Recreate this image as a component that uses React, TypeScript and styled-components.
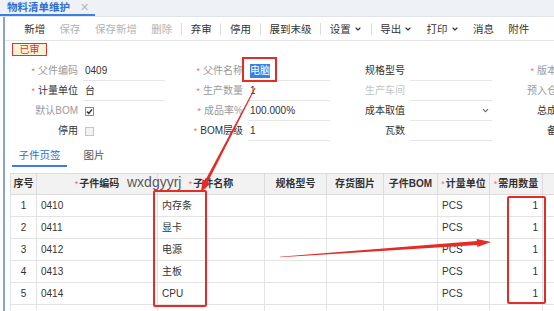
import React from "react";
import styled, { createGlobalStyle } from "styled-components";
import { ChevronDown } from "lucide-react";

const GlobalStyle = createGlobalStyle`
  html, body {
    margin: 0;
    padding: 0;
    background: #fff;
  }
  body {
    font-family: "Liberation Sans", "Noto Sans CJK SC", sans-serif;
    color: #333;
  }
`;

const Page = styled.div`
  position: relative;
  width: 554px;
  height: 311px;
  overflow: hidden;
  background: #fff;
`;

const TabBar = styled.div`
  height: 16px;
  background: #eef1f6;
  border-bottom: 1px solid #dfe4ec;
  display: flex;
`;

const DocTab = styled.div`
  width: 95px;
  height: 16px;
  box-sizing: border-box;
  padding-left: 7px;
  display: flex;
  align-items: center;
  gap: 10px;
  border-bottom: 2px solid #3d7fdc;
  color: #2e6fd3;
  font-size: 10.5px;
  font-weight: bold;
  line-height: 14px;
`;

const CloseMark = styled.span`
  color: #b4b8c0;
  font-weight: normal;
  font-size: 11px;
`;

const Body = styled.div`
  margin-left: 3px;
  border-left: 2px solid #86a2d6;
  height: 294px;
`;

const Toolbar = styled.div`
  height: 23px;
  border-bottom: 1px solid #e4e4e4;
  display: flex;
  align-items: center;
  padding-left: 12px;
  font-size: 10.5px;
  line-height: 14px;
  white-space: nowrap;
`;

const ToolButton = styled.span<{ $disabled?: boolean }>`
  display: flex;
  align-items: center;
  gap: 3px;
  padding: 0 7.2px;
  color: ${(p) => (p.$disabled ? "#b3b3b3" : "#333")};
`;

const ToolSep = styled.span`
  width: 1px;
  height: 12px;
  margin: 0 1.5px;
  background: #dcdcdc;
`;

const StatusBadge = styled.div`
  margin: 2px 0 0 7px;
  width: 35px;
  height: 13px;
  box-sizing: border-box;
  border: 1px solid #d8372f;
  background: #fcf2d6;
  color: #d8372f;
  font-size: 10px;
  line-height: 11px;
  text-align: center;
`;

const FormGrid = styled.div`
  margin-top: 5px;
  display: grid;
  grid-template-columns: 78px 82px 83px 82px 80px 82px 80px;
  grid-auto-rows: 20px;
  font-size: 10px;
  line-height: 12px;
  white-space: nowrap;
`;

const toneColor = { dark: "#333", muted: "#9a9a9a", faint: "#c4c4c4" };

const FieldLabel = styled.div<{ $tone: keyof typeof toneColor }>`
  display: flex;
  align-items: center;
  justify-content: flex-end;
  padding-right: 5px;
  color: ${(p) => toneColor[p.$tone]};
`;

const Star = styled.span`
  color: #ef6d6d;
  margin-right: 3px;
  font-size: 9px;
`;

const FieldValue = styled.div<{ $line?: boolean }>`
  display: flex;
  align-items: center;
  justify-content: space-between;
  box-sizing: border-box;
  padding: 0 2px;
  color: #333;
  border-bottom: ${(p) => (p.$line ? "1px solid #e6e6e6" : "none")};
`;

const Selected = styled.span`
  background: #3c7fe6;
  color: #fff;
  padding: 1px 0;
`;

const CheckBox = styled.span<{ $checked?: boolean }>`
  width: 9px;
  height: 9px;
  box-sizing: border-box;
  border: 1px solid ${(p) => (p.$checked ? "#8a8a8a" : "#c4c4c4")};
  background: ${(p) => (p.$checked ? "#fff" : "#f3f3f3")};
  display: flex;
  align-items: center;
  justify-content: center;
`;

const SubTabs = styled.div`
  height: 26px;
  margin-left: 7px;
  display: flex;
  gap: 10px;
`;

const SubTab = styled.div<{ $active?: boolean }>`
  display: flex;
  align-items: center;
  box-sizing: border-box;
  padding: 2px 6.5px 0;
  font-size: 10.5px;
  color: ${(p) => (p.$active ? "#2e6fd3" : "#555")};
  border-bottom: 2px solid ${(p) => (p.$active ? "#3d7fdc" : "transparent")};
`;

const TableWrap = styled.div`
  margin: 6px 0 0 5px;
`;

const Table = styled.table`
  border-collapse: collapse;
  table-layout: fixed;
  width: 592px;
  font-size: 10px;
  line-height: 12px;
`;

const Th = styled.th`
  height: 20px;
  padding: 0;
  background: #f2f2f2;
  border: 1px solid #dcdcdc;
  font-weight: bold;
  color: #333;
  text-align: center;
  white-space: nowrap;
`;

const HeadStar = styled.span`
  color: #ef6d6d;
  font-weight: normal;
  font-size: 9px;
  margin-right: 1px;
`;

const Td = styled.td<{ $align?: "left" | "center" | "right" }>`
  height: 21px;
  padding: 0 4px;
  border: 1px solid #e3e3e3;
  color: #333;
  text-align: ${(p) => p.$align || "left"};
  white-space: nowrap;
`;

const Watermark = styled.span`
  position: absolute;
  left: 127px;
  top: 175px;
  font-family: "Liberation Sans", sans-serif;
  font-size: 14px;
  line-height: 14px;
  color: #5a5a5a;
`;

const Overlay = styled.svg`
  position: absolute;
  left: 0;
  top: 0;
  pointer-events: none;
`;

const colWidths = [26, 121, 107, 62, 57, 54, 52, 53, 60];

const parts = [
  { code: "0410", name: "内存条" },
  { code: "0411", name: "显卡" },
  { code: "0412", name: "电源" },
  { code: "0413", name: "主板" },
  { code: "0414", name: "CPU" },
];

const tools: (string | { label: string; disabled?: boolean; caret?: boolean })[] = [
  { label: "新增" },
  { label: "保存", disabled: true },
  { label: "保存新增", disabled: true },
  { label: "删除", disabled: true },
  "|",
  { label: "弃审" },
  "|",
  { label: "停用" },
  "|",
  { label: "展到末级" },
  "|",
  { label: "设置", caret: true },
  "|",
  { label: "导出", caret: true },
  { label: "打印", caret: true },
  { label: "消息" },
  { label: "附件" },
];

const Check = () => (
  <svg width="7" height="7" viewBox="0 0 7 7">
    <path d="M1 3.6 L2.8 5.4 L6 1.4" fill="none" stroke="#333" strokeWidth="1.5" />
  </svg>
);

export default function App() {
  return (
    <Page>
      <GlobalStyle />
      <TabBar>
        <DocTab>
          物料清单维护
          <CloseMark>✕</CloseMark>
        </DocTab>
      </TabBar>
      <Body>
        <Toolbar>
          {tools.map((t, i) =>
            typeof t === "string" ? (
              <ToolSep key={i} />
            ) : (
              <ToolButton key={i} $disabled={t.disabled}>
                {t.label}
                {t.caret && <ChevronDown size={8} strokeWidth={3.5} />}
              </ToolButton>
            )
          )}
        </Toolbar>
        <StatusBadge>已审</StatusBadge>
        <FormGrid>
          <FieldLabel $tone="muted"><Star>*</Star>父件编码</FieldLabel>
          <FieldValue $line>0409</FieldValue>
          <FieldLabel $tone="muted"><Star>*</Star>父件名称</FieldLabel>
          <FieldValue $line><Selected>电脑</Selected></FieldValue>
          <FieldLabel $tone="dark">规格型号</FieldLabel>
          <FieldValue $line />
          <FieldLabel $tone="muted"><Star>*</Star>版本号</FieldLabel>

          <FieldLabel $tone="dark"><Star>*</Star>计量单位</FieldLabel>
          <FieldValue $line>台</FieldValue>
          <FieldLabel $tone="muted"><Star>*</Star>生产数量</FieldLabel>
          <FieldValue $line>1</FieldValue>
          <FieldLabel $tone="faint">生产车间</FieldLabel>
          <FieldValue $line />
          <FieldLabel $tone="muted">预入仓库</FieldLabel>

          <FieldLabel $tone="muted">默认BOM</FieldLabel>
          <FieldValue><CheckBox $checked><Check /></CheckBox></FieldValue>
          <FieldLabel $tone="muted"><Star>*</Star>成品率%</FieldLabel>
          <FieldValue $line>100.000%</FieldValue>
          <FieldLabel $tone="dark">成本取值</FieldLabel>
          <FieldValue $line>
            <span />
            <ChevronDown size={9} strokeWidth={3} color="#666" />
          </FieldValue>
          <FieldLabel $tone="dark">总成本</FieldLabel>

          <FieldLabel $tone="dark">停用</FieldLabel>
          <FieldValue><CheckBox /></FieldValue>
          <FieldLabel $tone="dark"><Star>*</Star>BOM层级</FieldLabel>
          <FieldValue $line>1</FieldValue>
          <FieldLabel $tone="dark">瓦数</FieldLabel>
          <FieldValue $line />
          <FieldLabel $tone="dark">备注</FieldLabel>
        </FormGrid>
        <SubTabs>
          <SubTab $active>子件页签</SubTab>
          <SubTab>图片</SubTab>
        </SubTabs>
        <TableWrap>
          <Table>
            <colgroup>
              {colWidths.map((w, i) => (
                <col key={i} style={{ width: w }} />
              ))}
            </colgroup>
            <thead>
              <tr>
                <Th>序号</Th>
                <Th><HeadStar>*</HeadStar>子件编码</Th>
                <Th><HeadStar>*</HeadStar>子件名称</Th>
                <Th>规格型号</Th>
                <Th>存货图片</Th>
                <Th>子件BOM</Th>
                <Th><HeadStar>*</HeadStar>计量单位</Th>
                <Th><HeadStar>*</HeadStar>需用数量</Th>
                <Th />
              </tr>
            </thead>
            <tbody>
              {parts.map((p, i) => (
                <tr key={p.code}>
                  <Td $align="center">{i + 1}</Td>
                  <Td>{p.code}</Td>
                  <Td>{p.name}</Td>
                  <Td />
                  <Td />
                  <Td />
                  <Td>PCS</Td>
                  <Td $align="right">1</Td>
                  <Td />
                </tr>
              ))}
              <tr>
                {colWidths.map((_, i) => (
                  <Td key={i} />
                ))}
              </tr>
            </tbody>
          </Table>
        </TableWrap>
      </Body>
      <Watermark>wxdgyyrj</Watermark>
      <Overlay width="554" height="311" viewBox="0 0 554 311">
        <g fill="none" stroke="#e52b25" strokeWidth="2">
          <rect x="243" y="58" width="33" height="23" />
          <rect x="154" y="191" width="52" height="115" rx="1" />
          <rect x="508" y="197" width="37" height="106" rx="1" />
        </g>
        <g fill="#e52b25">
          <polygon points="255.4,88.2 254.6,87.8 205.2,180.6 207.8,182" />
          <polygon points="201,192 210.5,183.4 202.5,179.2" />
          <polygon points="280,257.3 280,256.7 477,241 477.3,245" />
          <polygon points="491,242 477.3,247 476.7,239" />
        </g>
      </Overlay>
    </Page>
  );
}
